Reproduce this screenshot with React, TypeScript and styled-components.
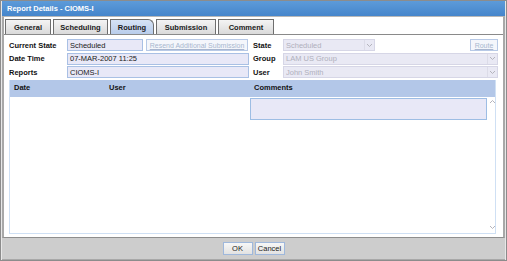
import React from "react";
import styled, { createGlobalStyle } from "styled-components";

const Global = createGlobalStyle`
  html, body { margin: 0; padding: 0; background: #ffffff; }
  body { font-family: "Liberation Sans", Arial, sans-serif; font-size: 7.5px; }
  * { box-sizing: border-box; }
`;

const Window = styled.div`
  width: 507px;
  height: 261px;
  display: flex;
  flex-direction: column;
  background: #cdcdcd;
  border: 1px solid #8c8c8c;
  padding: 0 1px 2px 1px;
  box-shadow: inset 1px 0 0 #e8e8e8, inset -1px 0 0 #e8e8e8, inset 0 -1px 0 #a8a8a8;
`;

const TitleBar = styled.div`
  height: 15px;
  flex: none;
  display: flex;
  align-items: center;
  padding-left: 5px;
  background: linear-gradient(#5d9bd9, #4585cb);
  color: #ffffff;
  font-weight: bold;
  font-size: 7.5px;
`;

const Body = styled.div`
  flex: 1;
  display: flex;
  flex-direction: column;
  background: #ffffff;
  border-left: 2px solid #a8a8a8;
  border-right: 2px solid #a8a8a8;
  border-bottom: 1px solid #8e8e8e;
  border-top: 1px solid #b8b8b8;
  padding-top: 2px;
  min-height: 0;
`;

const TabBar = styled.div`
  display: flex;
  gap: 2px;
  padding-left: 1px;
  height: 15px;
  flex: none;
`;

const Tab = styled.div<{ $w: number; $active?: boolean }>`
  width: ${(p) => p.$w}px;
  height: 15px;
  display: flex;
  align-items: center;
  justify-content: center;
  font-weight: bold;
  font-size: 7.5px;
  color: #1a1a1a;
  border: 1px solid #6e6e6e;
  border-bottom: none;
  border-radius: ${(p) => (p.$active ? "0 6px 0 0" : "0")};
  background: ${(p) =>
    p.$active
      ? "linear-gradient(#d6e3f5, #b9cdeb)"
      : "linear-gradient(#f4f4f4, #dadada)"};
`;

const Panel = styled.div`
  flex: 1;
  display: flex;
  flex-direction: column;
  padding: 4px 7px 3px 5px;
  border-top: 1px solid #8a8a8a;
  min-height: 0;
`;

const Form = styled.div`
  display: grid;
  grid-template-columns: 58px 182px 4px 30px 215px;
  grid-auto-rows: 12px;
  row-gap: 1.5px;
  align-items: stretch;
`;

const Label = styled.div`
  font-weight: bold;
  font-size: 7.5px;
  color: #111;
  display: flex;
  align-items: center;
`;

const Spacer = styled.div``;

const FieldGroup = styled.div`
  display: flex;
  gap: 3px;
  align-items: stretch;
`;

const TextInput = styled.div<{ $w?: number }>`
  ${(p) => (p.$w ? `width: ${p.$w}px;` : "flex: 1;")}
  background: #e8e8f7;
  border: 1px solid #a9c0e4;
  font-size: 7.5px;
  color: #1a1a1a;
  display: flex;
  align-items: center;
  padding-left: 2px;
`;

const LinkButton = styled.div<{ $w: number }>`
  width: ${(p) => p.$w}px;
  border: 1px solid #b7c9e6;
  background: #f4f6fb;
  color: #a8b6cf;
  font-size: 7px;
  text-decoration: underline;
  display: flex;
  align-items: center;
  justify-content: center;
`;

const Select = styled.div<{ $w?: number }>`
  ${(p) => (p.$w ? `width: ${p.$w}px;` : "flex: 1;")}
  background: #e9e9f4;
  border: 1px solid #d6d6e6;
  color: #b0b0bc;
  font-size: 7.5px;
  display: flex;
  align-items: center;
  padding-left: 2px;
`;

const SelectText = styled.span`
  flex: 1;
`;

const Arrow = styled.div`
  width: 10px;
  height: 100%;
  display: flex;
  align-items: center;
  justify-content: center;
  border-left: 1px solid #dcdce8;
`;

const Grow = styled.div`
  flex: 1;
`;

const Table = styled.div`
  margin-top: 2px;
  flex: 1;
  display: flex;
  flex-direction: column;
  border: 1px solid #cfe0f4;
  border-top: none;
  min-height: 0;
`;

const HeaderRow = styled.div`
  display: grid;
  grid-template-columns: 95px 145px 249px;
  height: 17px;
  flex: none;
  background: #b3c7e8;
`;

const HeaderCell = styled.div`
  font-weight: bold;
  font-size: 7.5px;
  color: #111;
  padding: 3px 0 0 4px;
`;

const TableBody = styled.div`
  flex: 1;
  display: grid;
  grid-template-columns: 240px 237px 11px;
  min-height: 0;
`;

const EmptyCell = styled.div``;

const CommentCell = styled.div`
  padding-top: 1px;
`;

const CommentBox = styled.div`
  height: 22px;
  background: #e8e8f7;
  border: 1px solid #9dbde4;
`;

const ScrollBar = styled.div`
  display: flex;
  flex-direction: column;
  justify-content: space-between;
  align-items: center;
  padding: 2px 0 3px;
`;

const Footer = styled.div`
  height: 20px;
  flex: none;
  display: flex;
  align-items: center;
  justify-content: center;
  gap: 2px;
  background: #cdcdcd;
`;

const Button = styled.div<{ $w: number }>`
  width: ${(p) => p.$w}px;
  height: 13px;
  background: linear-gradient(#f7f7f7, #e2e2e2);
  border: 1px solid #9fb8dc;
  font-size: 7.5px;
  color: #222;
  display: flex;
  align-items: center;
  justify-content: center;
`;

const Chevron = ({ up }: { up?: boolean }) => (
  <svg width="7" height="5" viewBox="0 0 7 5">
    <path
      d={up ? "M1 4 L3.5 1.5 L6 4" : "M1 1 L3.5 3.5 L6 1"}
      fill="none"
      stroke="#b4b4bc"
      strokeWidth="1"
    />
  </svg>
);

export default function App() {
  return (
    <>
      <Global />
      <Window>
        <TitleBar>Report Details - CIOMS-I</TitleBar>
        <Body>
          <TabBar>
            <Tab $w={46}>General</Tab>
            <Tab $w={55}>Scheduling</Tab>
            <Tab $w={44} $active>
              Routing
            </Tab>
            <Tab $w={60}>Submission</Tab>
            <Tab $w={56}>Comment</Tab>
          </TabBar>
          <Panel>
            <Form>
              <Label>Current State</Label>
              <FieldGroup>
                <TextInput $w={76}>Scheduled</TextInput>
                <LinkButton $w={102}>Resend Additional Submission</LinkButton>
              </FieldGroup>
              <Spacer />
              <Label>State</Label>
              <FieldGroup>
                <Select $w={92}>
                  <SelectText>Scheduled</SelectText>
                  <Arrow>
                    <Chevron />
                  </Arrow>
                </Select>
                <Grow />
                <LinkButton $w={28}>Route</LinkButton>
              </FieldGroup>

              <Label>Date Time</Label>
              <TextInput>07-MAR-2007 11:25</TextInput>
              <Spacer />
              <Label>Group</Label>
              <Select>
                <SelectText>LAM US Group</SelectText>
                <Arrow>
                  <Chevron />
                </Arrow>
              </Select>

              <Label>Reports</Label>
              <TextInput>CIOMS-I</TextInput>
              <Spacer />
              <Label>User</Label>
              <Select>
                <SelectText>John Smith</SelectText>
                <Arrow>
                  <Chevron />
                </Arrow>
              </Select>
            </Form>
            <Table>
              <HeaderRow>
                <HeaderCell>Date</HeaderCell>
                <HeaderCell>User</HeaderCell>
                <HeaderCell>Comments</HeaderCell>
              </HeaderRow>
              <TableBody>
                <EmptyCell />
                <CommentCell>
                  <CommentBox />
                </CommentCell>
                <ScrollBar>
                  <Chevron up />
                  <Chevron />
                </ScrollBar>
              </TableBody>
            </Table>
          </Panel>
        </Body>
        <Footer>
          <Button $w={30}>OK</Button>
          <Button $w={30}>Cancel</Button>
        </Footer>
      </Window>
    </>
  );
}
